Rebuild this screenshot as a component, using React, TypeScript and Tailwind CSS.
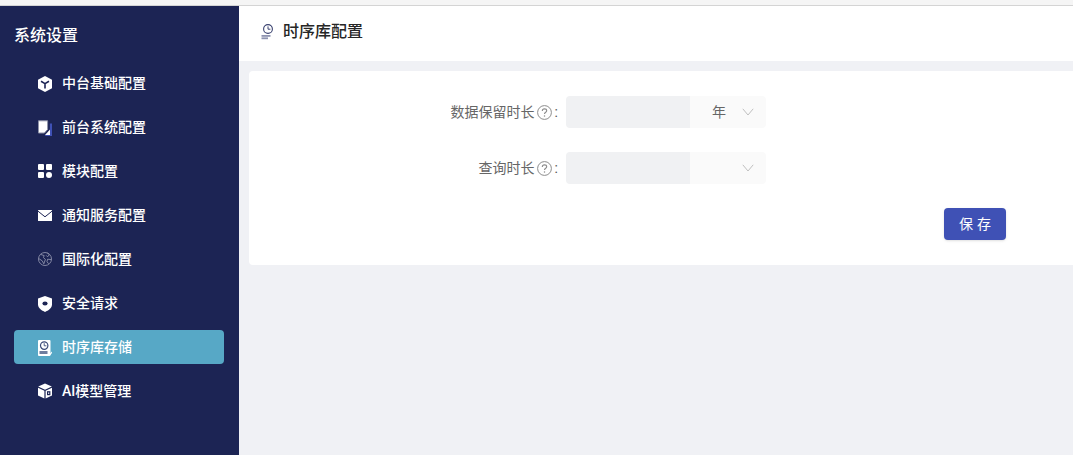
import React from "react";

const ic = "w-[14px] h-[16px] mt-[2px] shrink-0";

function Cube() {
  return (
    <svg viewBox="0 0 14 16" className={ic}>
      <path fill="#fff" d="M7 0 14 3.8V12.2L7 16 0 12.2V3.8Z" />
      <path fill="none" stroke="#1c2454" strokeWidth="1.6" d="M3 5.2 7 7.6 11 5.2M7 7.6V12.4" />
    </svg>
  );
}
function Doc() {
  return (
    <svg viewBox="0 0 14 16" className={ic}>
      <path fill="#3f51b5" d="M14 3.6V16.4H6.2L9 13.4H11.8V3.6Z" />
      <path fill="#fff" stroke="#8f93a8" strokeWidth="1" d="M0.5 0.8H9.6V9.4L6.4 13H0.5Z" />
      <path fill="#fff" d="M7 15 12 9.5V15Z" />
    </svg>
  );
}
function Grid() {
  return (
    <svg viewBox="0 0 14 14" className="w-[14px] h-[14px] shrink-0" fill="#fff">
      <rect x="0" y="0" width="6" height="6" rx="1" />
      <rect x="8" y="0" width="6" height="6" rx="1" />
      <rect x="0" y="8" width="6" height="6" rx="1" />
      <circle cx="11" cy="11" r="3" />
    </svg>
  );
}
function Mail() {
  return (
    <svg viewBox="0 0 14 11" className="w-[14px] h-[11px] shrink-0">
      <rect x="0" y="0" width="14" height="11" rx="0.5" fill="#fff" />
      <path fill="none" stroke="#1c2454" strokeWidth="1" d="M0 1.2 7 6.8 14 1.2" />
    </svg>
  );
}
function Globe() {
  return (
    <svg viewBox="0 0 14 14" className="w-[14px] h-[14px] shrink-0" fill="none" stroke="#8d92ab" strokeWidth="0.9">
      <circle cx="7" cy="7" r="6.5" />
      <path d="M2.6 2.4 6.2 3.6 5.4 5.6 7.4 7.4 5.8 11.8 4.2 8.8 0.8 6.6M9.2 1 11.4 2.6 9.6 4.8 8.2 3.4M13.2 7.6 9.6 7.2 9 9.6 10.6 11.8" />
    </svg>
  );
}
function Shield() {
  return (
    <svg viewBox="0 0 14 16" className={ic}>
      <path fill="#fff" d="M7 0 14 2.4V8.6C14 12.2 10.4 14.6 7 16 3.6 14.6 0 12.2 0 8.6V2.4Z" />
      <ellipse cx="7" cy="7.6" rx="2.6" ry="2" fill="#1c2454" />
    </svg>
  );
}
function Store() {
  return (
    <svg viewBox="0 0 14 16" className={ic}>
      <rect x="0" y="0" width="12.5" height="16" rx="1" fill="#fff" />
      <circle cx="6.2" cy="5.6" r="3.7" fill="none" stroke="#3c4a78" strokeWidth="1.2" />
      <path fill="none" stroke="#3c4a78" strokeWidth="0.9" d="M6.2 3.2V5.8H8.4" />
      <rect x="1.5" y="11" width="8" height="3" fill="#6f7d9e" />
      <path fill="#fff" d="M11 14.5 14 11.4V13L12.4 15Z" />
    </svg>
  );
}
function Box() {
  return (
    <svg viewBox="0 0 14 16" className="w-[14px] h-[16px] shrink-0">
      <path fill="#fff" d="M7 0.4 13.8 3.6 7 6.8 0.2 3.6Z" />
      <path fill="#fff" d="M0 4.8 6.4 7.8V15.6L0 12.4Z" />
      <path fill="#fff" d="M7.6 7.8 14 4.8V12.4L7.6 15.6Z" />
      <rect x="9" y="8.2" width="3.4" height="4" fill="#1c2454" />
      <rect x="10.2" y="9.4" width="1" height="1.6" fill="#fff" />
    </svg>
  );
}
function Help() {
  return (
    <svg viewBox="0 0 15 15" className="w-[15px] h-[15px] shrink-0 block" fill="none" stroke="#8c8c8c">
      <circle cx="7.5" cy="7.5" r="6.9" strokeWidth="1" />
      <path strokeWidth="1.1" d="M5.3 5.9C5.3 4.6 6.3 3.9 7.5 3.9S9.7 4.7 9.7 5.8C9.7 7.2 7.5 7.3 7.5 9" />
      <circle cx="7.5" cy="10.9" r="0.75" fill="#8c8c8c" stroke="none" />
    </svg>
  );
}
function Chevron() {
  return (
    <svg viewBox="0 0 12 8" className="w-[12px] h-[8px] block" fill="none" stroke="#bfbfbf" strokeWidth="1">
      <path d="M0.8 0.8 6 7 11.2 0.8" />
    </svg>
  );
}

const items: { label: string; icon: React.ReactNode; active?: boolean }[] = [
  { label: "中台基础配置", icon: <Cube /> },
  { label: "前台系统配置", icon: <Doc /> },
  { label: "模块配置", icon: <Grid /> },
  { label: "通知服务配置", icon: <Mail /> },
  { label: "国际化配置", icon: <Globe /> },
  { label: "安全请求", icon: <Shield /> },
  { label: "时序库存储", icon: <Store />, active: true },
  { label: "AI模型管理", icon: <Box /> },
];

function Row({ label, unit }: { label: string; unit?: string }) {
  return (
    <div className="flex h-8 items-center">
      <div className="w-[310px] flex items-center justify-end text-sm text-[#666666]">
        <span>{label}</span>
        <span className="ml-[2px]"><Help /></span>
        <span className="ml-[3px] mr-[8px] text-[#555555]">:</span>
      </div>
      <div className="flex h-8 w-[200px] rounded-[4px] overflow-hidden">
        <div className="w-[124px] bg-[#f0f1f3]" />
        <div className="flex-1 bg-[#fafafa] flex items-center justify-between pl-[22px] pr-[12px]">
          <span className="text-sm text-[#666666]">{unit}</span>
          <Chevron />
        </div>
      </div>
    </div>
  );
}

export default function App() {
  return (
    <div
      className="w-[1073px] h-[455px] overflow-hidden flex flex-col bg-[#f0f1f5]"
      style={{ fontFamily: '"Roboto", "Noto Sans CJK SC", sans-serif' }}
    >
      <div className="h-[6px] shrink-0 bg-[#f5f5f5] border-b border-[#d4d4d4]" />
      <div className="flex flex-1 min-h-0">
        <aside className="w-[239px] shrink-0 bg-[#1c2454] px-[14px]">
          <div className="h-[60px] flex items-center text-base font-medium text-white leading-none pb-[1px]">系统设置</div>
          <nav className="flex flex-col gap-[10px]">
            {items.map((it) => (
              <div
                key={it.label}
                className={
                  "h-[34px] w-[210px] flex items-center pl-[24px] gap-[10px] rounded-[4px] text-sm font-medium text-white " +
                  (it.active ? "bg-[#57a8c6]" : "")
                }
              >
                {it.icon}
                <span>{it.label}</span>
              </div>
            ))}
          </nav>
        </aside>
        <main className="flex-1 min-w-0 flex flex-col">
          <header className="h-[55px] shrink-0 bg-white flex items-center pl-[22px] pb-[3px] gap-[10px]">
            <svg viewBox="0 0 12 16" className="w-[12px] h-[16px] shrink-0" fill="none">
              <circle cx="7" cy="5" r="4.4" stroke="#3a4270" strokeWidth="1.1" />
              <path d="M7 2.4V5.2H9.4" stroke="#3a4270" strokeWidth="1" />
              <rect x="0.5" y="11" width="9" height="1.8" fill="#8e93b0" />
              <rect x="0.5" y="13.4" width="6.5" height="1.8" fill="#8e93b0" />
            </svg>
            <span className="text-base font-medium text-[#262626]">时序库配置</span>
          </header>
          <section className="mt-[10px] ml-[10px] h-[194px] bg-white rounded-l-[4px] pt-[25px] pl-[7px]">
            <div className="flex flex-col gap-6 mb-6">
              <Row label="数据保留时长" unit="年" />
              <Row label="查询时长" />
            </div>
            <div className="pl-[688px]">
              <button className="w-[62px] h-8 pl-1 rounded-[4px] bg-[#3f51b5] text-white text-sm tracking-[4px] shadow-sm">保存</button>
            </div>
          </section>
        </main>
      </div>
    </div>
  );
}
